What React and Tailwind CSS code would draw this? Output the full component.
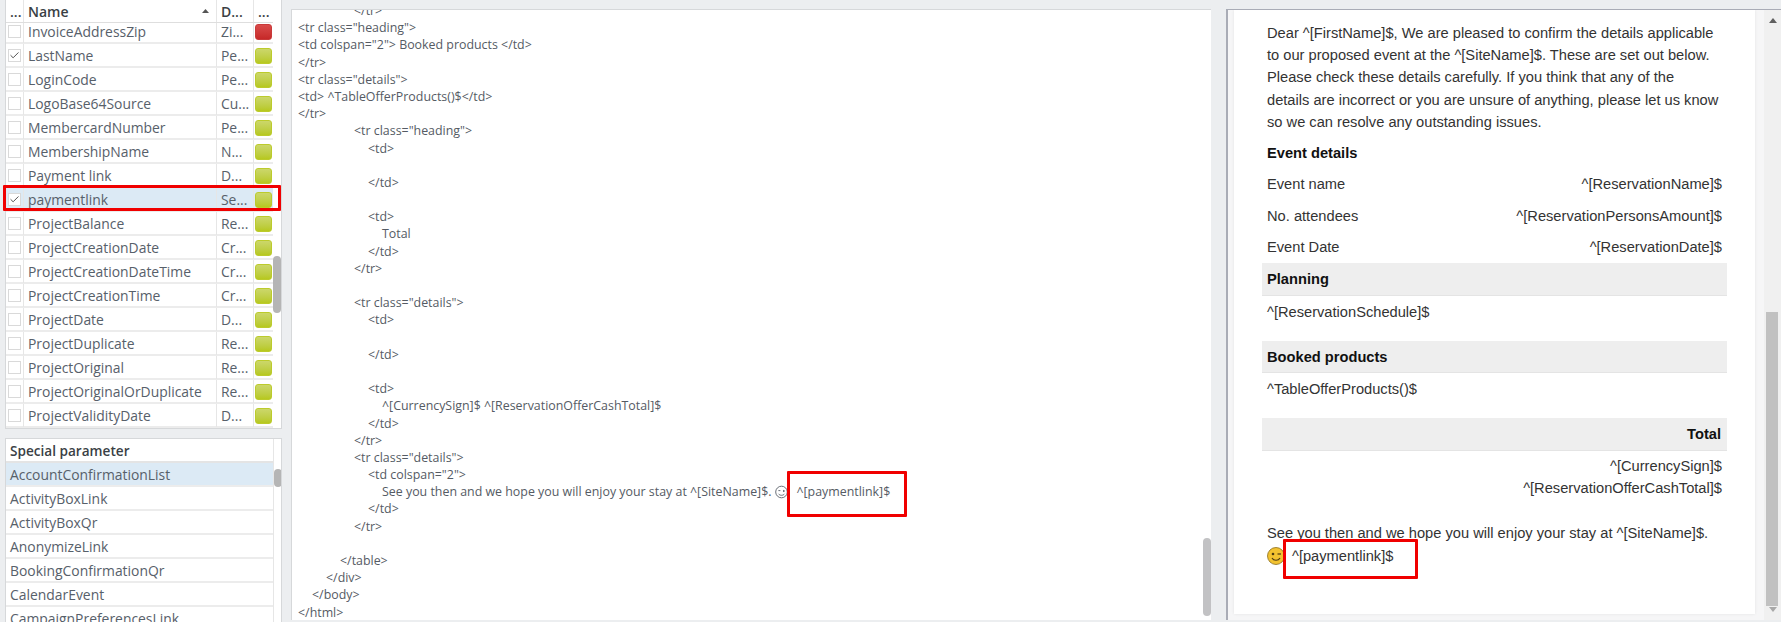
import { Check } from 'lucide-react'

const params = [
  ['InvoiceAddressZip', 'Zi...', false, true],
  ['LastName', 'Pe...', true],
  ['LoginCode', 'Pe...'],
  ['LogoBase64Source', 'Cu...'],
  ['MembercardNumber', 'Pe...'],
  ['MembershipName', 'N...'],
  ['Payment link', 'D...'],
  ['paymentlink', 'Se...', true],
  ['ProjectBalance', 'Re...'],
  ['ProjectCreationDate', 'Cr...'],
  ['ProjectCreationDateTime', 'Cr...'],
  ['ProjectCreationTime', 'Cr...'],
  ['ProjectDate', 'D...'],
  ['ProjectDuplicate', 'Re...'],
  ['ProjectOriginal', 'Re...'],
  ['ProjectOriginalOrDuplicate', 'Re...'],
  ['ProjectValidityDate', 'D...'],
]

const special = [
  'AccountConfirmationList',
  'ActivityBoxLink',
  'ActivityBoxQr',
  'AnonymizeLink',
  'BookingConfirmationQr',
  'CalendarEvent',
  'CampaignPreferencesLink',
]

// [indent in px, text]
const code = [
  [56, '</tr>'],
  [0, '<tr class="heading">'],
  [0, '<td colspan="2"> Booked products </td>'],
  [0, '</tr>'],
  [0, '<tr class="details">'],
  [0, '<td> ^TableOfferProducts()$</td>'],
  [0, '</tr>'],
  [56, '<tr class="heading">'],
  [70, '<td>'],
  [0, ''],
  [70, '</td>'],
  [0, ''],
  [70, '<td>'],
  [84, 'Total'],
  [70, '</td>'],
  [56, '</tr>'],
  [0, ''],
  [56, '<tr class="details">'],
  [70, '<td>'],
  [0, ''],
  [70, '</td>'],
  [0, ''],
  [70, '<td>'],
  [84, '^[CurrencySign]$ ^[ReservationOfferCashTotal]$'],
  [70, '</td>'],
  [56, '</tr>'],
  [56, '<tr class="details">'],
  [70, '<td colspan="2">'],
  [84, 'SMILE'],
  [70, '</td>'],
  [56, '</tr>'],
  [0, ''],
  [42, '</table>'],
  [28, '</div>'],
  [14, '</body>'],
  [0, '</html>'],
]

const intro = [
  'Dear ^[FirstName]$, We are pleased to confirm the details applicable',
  'to our proposed event at the ^[SiteName]$. These are set out below.',
  'Please check these details carefully. If you think that any of the',
  'details are incorrect or you are unsure of anything, please let us know',
  'so we can resolve any outstanding issues.',
]

function StatusCell({ red }) {
  return (
    <div
      className={`w-[17px] h-[16px] mt-[1px] rounded-[3px] border ${
        red
          ? 'bg-gradient-to-b from-[#d94a4a] to-[#c62828] border-[#c93a3a]'
          : 'bg-gradient-to-b from-[#ccd76a] to-[#b7c81c] border-[#bccb2c]'
      }`}
    />
  )
}

function ParamRow({ name, desc, checked, red }) {
  const selected = name === 'paymentlink'
  return (
    <div
      className={`grid grid-cols-[18px_193px_37px_19px] h-[24px] items-center border-b-2 border-[#ececec] ${
        selected ? 'bg-[#dceaf5]' : 'bg-white'
      }`}
    >
      <div className="h-full flex items-center justify-center border-r border-[#e6e6e6]">
        <div className="w-[13px] h-[13px] border border-[#d9d9d9] bg-white flex items-center justify-center">
          {checked && <Check size={11} strokeWidth={2} className="text-[#444]" />}
        </div>
      </div>
      <div className="h-full flex items-center pl-[4px] pt-[2px] border-r border-[#e6e6e6] text-[#57606a]">{name}</div>
      <div className="h-full flex items-center pl-[4px] pt-[2px] border-r border-[#e6e6e6] text-[#57606a]">{desc}</div>
      <div className="h-full flex items-center pl-[1px]">
        <StatusCell red={red} />
      </div>
    </div>
  )
}

function WinkOutline() {
  return (
    <svg width="13" height="14" viewBox="0 0 13 14" fill="none" stroke="#6b7078" strokeWidth="1" className="ml-[4px] mr-[8px] shrink-0">
      <circle cx="6.5" cy="7" r="5.8" />
      <path d="M3.4 5.6h2M8 5.2l1.6.8-1.6.8" />
      <path d="M3.6 8.8c1 2 4.8 2 5.8 0" />
    </svg>
  )
}

function WinkEmoji() {
  return (
    <svg width="18" height="18" viewBox="0 0 18 18" className="shrink-0">
      <circle cx="9" cy="9" r="8.5" fill="#f2c230" stroke="#8a6d1c" strokeWidth="0.8" />
      <circle cx="6" cy="7" r="1.3" fill="#4d3a10" />
      <path d="M10.5 7h3.5" stroke="#4d3a10" strokeWidth="1.2" />
      <path d="M5 11c1.6 3 6.4 3 8 0" fill="none" stroke="#4d3a10" strokeWidth="1.2" />
    </svg>
  )
}

function Band({ children, right, tall }) {
  return (
    <div
      className={`${tall ? 'h-[33px]' : 'h-[32px]'} -mx-[5px] pl-[5px] pr-[6px] bg-[#eeeeee] border-b border-[#e4e4e4] flex items-center font-bold text-[#111] ${
        right ? 'justify-end' : ''
      }`}
    >
      {children}
    </div>
  )
}

function DetailRow({ label, value }) {
  return (
    <div className="h-[31.5px] flex items-center justify-between">
      <span>{label}</span>
      <span>{value}</span>
    </div>
  )
}

export default function App() {
  return (
    <div className="w-[1781px] h-[622px] bg-[#eceef0] flex overflow-hidden relative">
      {/* Left column */}
      <div className="ml-[5px] w-[277px] h-full flex flex-col font-['Open_Sans',sans-serif] text-[13.9px] shrink-0 relative">
        <div className="h-[429px] bg-white border-x border-b border-[#d6d8da] flex overflow-hidden relative shrink-0">
          <div className="w-[267px] shrink-0 overflow-hidden">
            <div className="relative z-10 h-[23px] bg-white border-b border-[#dedede] grid grid-cols-[18px_193px_37px_19px] items-center font-semibold text-[#3a3f45] text-[14px]">
              <div className="h-full flex items-center pl-[4px] border-r border-[#e6e6e6]">...</div>
              <div className="h-full flex items-center justify-between pl-[4px] pr-[7px] border-r border-[#e6e6e6]">
                Name
                <svg width="7" height="4" viewBox="0 0 7 4">
                  <path d="M3.5 0L7 4H0z" fill="#555" />
                </svg>
              </div>
              <div className="h-full flex items-center pl-[4px] border-r border-[#e6e6e6]">D...</div>
              <div className="h-full flex items-center pl-[4px]">...</div>
            </div>
            <div className="-mt-[3px]">
              {params.map(([name, desc, checked, red]) => (
                <ParamRow key={name} name={name} desc={desc} checked={checked} red={red} />
              ))}
            </div>
          </div>
          <div className="flex-1 relative">
            <div className="absolute top-[256px] left-0 w-[8px] h-[57px] rounded-[4px] bg-[#b5b5b5]" />
          </div>
        </div>

        <div className="mt-[9px] flex-1 bg-white border-x border-t border-[#d6d8da] flex overflow-hidden">
          <div className="w-[267px] shrink-0">
            <div className="h-[24px] pt-[3px] border-b-2 border-[#e4e4e4] flex items-center pl-[4px] font-semibold text-[#3a3f45] text-[13.6px]">
              Special parameter
            </div>
            {special.map((name, i) => (
              <div
                key={name}
                className={`h-[24px] flex items-center pl-[4px] pt-[2px] border-b-2 border-[#ececec] text-[#57606a] ${
                  i === 0 ? 'bg-[#dceaf5]' : ''
                }`}
              >
                {name}
              </div>
            ))}
          </div>
          <div className="flex-1 relative border-l border-[#e6e6e6]">
            <div className="absolute top-[30px] left-0 w-[8px] h-[18px] rounded-[4px] bg-[#b5b5b5]" />
          </div>
        </div>

        {/* Red highlight over the paymentlink row */}
        <div className="absolute left-[-2px] top-[185px] w-[278px] h-[26px] border-[3px] border-[#f00000] rounded-[1px]" />
      </div>

      {/* Code editor */}
      <div className="ml-[9px] mt-[9px] mb-[2px] w-[920px] shrink-0 bg-white border-l border-t border-[#d6d8da] overflow-hidden relative font-['Open_Sans',sans-serif] text-[12.4px] text-[#555b64]">
        <div className="-mt-[8px] pl-[6px]">
          {code.map(([indent, text], i) => (
            <div key={i} className="h-[17.2px] leading-[17.2px] whitespace-pre flex items-center">
              {text === 'SMILE' ? (
                <div className="flex items-center" style={{ paddingLeft: indent }}>
                  <span>See you then and we hope you will enjoy your stay at ^[SiteName]$.</span>
                  <WinkOutline />
                  <span>^[paymentlink]$</span>
                </div>
              ) : (
                <span style={{ paddingLeft: indent }}>{text}</span>
              )}
            </div>
          ))}
        </div>
        <div className="absolute top-[528px] right-0 w-[8px] h-[78px] rounded-[4px] bg-[#c2c2c4]" />
        <div className="absolute left-[495px] top-[461px] w-[120px] h-[46px] border-[3px] border-[#f00000] rounded-[1px]" />
      </div>

      {/* Preview */}
      <div className="ml-[15px] mt-[9px] mb-[2px] flex-1 flex bg-[#f6f6f7] border-l-2 border-t border-[#a9acb6] overflow-hidden relative">
        <div className="ml-[6px] w-[521px] h-[604px] bg-white shadow-[0_0_3px_rgba(0,0,0,0.08)] pl-[33px] pr-[33px] font-['Liberation_Sans',Arial,sans-serif] text-[14.67px] text-[#333] shrink-0">
          <div className="pt-[12px] leading-[22.2px]">
            {intro.map((line) => (
              <div key={line} className="whitespace-nowrap">{line}</div>
            ))}
          </div>
          <div className="h-[35.5px] pt-[5px] flex items-center font-bold text-[#111]">Event details</div>
          <DetailRow label="Event name" value="^[ReservationName]$" />
          <DetailRow label="No. attendees" value="^[ReservationPersonsAmount]$" />
          <DetailRow label="Event Date" value="^[ReservationDate]$" />
          <Band tall>Planning</Band>
          <div className="h-[32px] flex items-center">^[ReservationSchedule]$</div>
          <div className="mt-[13px]">
            <Band>Booked products</Band>
          </div>
          <div className="h-[31px] flex items-center">^TableOfferProducts()$</div>
          <div className="mt-[14px]">
            <Band right tall>Total</Band>
          </div>
          <div className="pt-[4px] text-right leading-[22px]">
            <div>^[CurrencySign]$</div>
            <div>^[ReservationOfferCashTotal]$</div>
          </div>
          <div className="mt-[23px] leading-[22px]">
            <div>See you then and we hope you will enjoy your stay at ^[SiteName]$.</div>
            <div className="mt-[1px] flex items-center gap-[7px]">
              <WinkEmoji />
              <span>^[paymentlink]$</span>
            </div>
          </div>
        </div>
        <div className="absolute right-0 top-0 bottom-0 w-[17px] bg-[#f0f0f0] flex flex-col items-center justify-between py-[8px]">
          <svg width="8" height="5" viewBox="0 0 8 5">
            <path d="M4 0l4 5H0z" fill="#606060" />
          </svg>
          <svg width="8" height="5" viewBox="0 0 8 5">
            <path d="M4 5l4-5H0z" fill="#a8a8a8" />
          </svg>
        </div>
        <div className="absolute top-[302px] right-[3px] w-[12px] h-[294px] bg-[#c1c1c1]" />
        <div className="absolute left-[55px] top-[529px] w-[135px] h-[40px] border-[3px] border-[#f00000] rounded-[1px]" />
      </div>
    </div>
  )
}
